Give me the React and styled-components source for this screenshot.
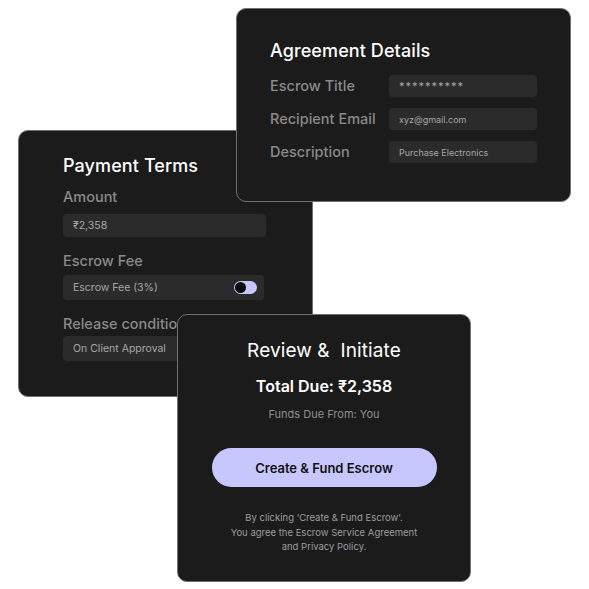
import React from 'react'
import styled, { createGlobalStyle } from 'styled-components'

const GlobalStyle = createGlobalStyle`
  html, body {
    margin: 0;
    padding: 0;
    background: #ffffff;
  }
  * {
    box-sizing: border-box;
  }
  body {
    font-family: Inter, "Noto Sans", sans-serif;
  }
`

const Canvas = styled.main`
  position: relative;
  width: 589px;
  height: 589px;
  background: #ffffff;
  overflow: hidden;
`

const Card = styled.section`
  position: absolute;
  left: ${p => p.$left}px;
  top: ${p => p.$top}px;
  width: ${p => p.$w}px;
  height: ${p => p.$h}px;
  background: #1b1b1b;
  border: 1px solid #707070;
  border-radius: 10px;
  display: flex;
  flex-direction: column;
`

const Title = styled.h2`
  margin: 0;
  font-size: 18px;
  line-height: 24px;
  font-weight: 500;
  color: #ffffff;
  letter-spacing: 0.1px;
`

const Label = styled.span`
  font-size: 14.5px;
  line-height: 20px;
  font-weight: 500;
  color: #8a8a8a;
  white-space: nowrap;
`

const Field = styled.div`
  display: flex;
  align-items: center;
  justify-content: space-between;
  width: ${p => p.$w || 148}px;
  height: ${p => p.$h || 22}px;
  padding: 0 ${p => p.$padR || 10}px 0 10px;
  background: #2b2b2b;
  border-radius: 4px;
  font-size: ${p => p.$fs || 9}px;
  color: #a6a6a6;
  white-space: nowrap;
  letter-spacing: ${p => p.$ls || 0}px;
`

/* agreement details */

const AgreementBody = styled.div`
  display: flex;
  flex-direction: column;
  gap: 12px;
  padding: 30px 0 0 33px;
`

const DetailGrid = styled.div`
  display: grid;
  grid-template-columns: 119px 148px;
  row-gap: 11px;
  align-items: center;
`

/* payment terms */

const PaymentBody = styled.div`
  display: flex;
  flex-direction: column;
  padding: 23px 0 0 44px;
`

const PaymentTitle = styled(Title)`
  margin-bottom: 9px;
`

const Group = styled.div`
  display: flex;
  flex-direction: column;
  gap: ${p => p.$gap || 7}px;
  margin-bottom: 14px;
`

const Toggle = styled.span`
  display: inline-flex;
  align-items: center;
  width: 23px;
  height: 13px;
  padding: 1px;
  border-radius: 7px;
  background: #c9c7ff;

  &::before {
    content: '';
    width: 11px;
    height: 11px;
    border-radius: 50%;
    background: #0a0a0a;
  }
`

/* review */

const ReviewBody = styled.div`
  display: flex;
  flex-direction: column;
  align-items: center;
  padding-top: 23px;
  text-align: center;
`

const ReviewTitle = styled(Title)`
  font-size: 19px;
  font-weight: 400;
  line-height: 26px;
  white-space: pre;
`

const Total = styled.div`
  margin-top: 11px;
  font-size: 16px;
  line-height: 22px;
  font-weight: 600;
  color: #ffffff;
`

const Due = styled.div`
  margin-top: 9px;
  font-size: 11px;
  line-height: 16px;
  color: #8f8f8f;
`

const Button = styled.button`
  margin-top: 26px;
  width: 225px;
  height: 39px;
  border: none;
  border-radius: 20px;
  background: #c8c7fd;
  color: #111111;
  font-family: inherit;
  font-size: 13px;
  font-weight: 600;
  cursor: pointer;
`

const Fine = styled.p`
  margin: 24px 0 0;
  font-size: 9.5px;
  line-height: 14.5px;
  color: #9d9d9d;
`

const App = () => {
  return (
    <>
      <GlobalStyle />
      <Canvas>
        <Card $left={18} $top={130} $w={295} $h={267}>
          <PaymentBody>
            <PaymentTitle>Payment Terms</PaymentTitle>
            <Group>
              <Label>Amount</Label>
              <Field $w={203} $h={23} $fs={10.5}>₹2,358</Field>
            </Group>
            <Group $gap={4}>
              <Label>Escrow Fee</Label>
              <Field $w={201} $h={25} $fs={10.5} $padR={7}>
                Escrow Fee (3%)
                <Toggle />
              </Field>
            </Group>
            <Group $gap={2}>
              <Label>Release conditions</Label>
              <Field $w={201} $h={25} $fs={10.5}>On Client Approval</Field>
            </Group>
          </PaymentBody>
        </Card>

        <Card $left={236} $top={8} $w={335} $h={194}>
          <AgreementBody>
            <Title>Agreement Details</Title>
            <DetailGrid>
              <Label>Escrow Title</Label>
              <Field $fs={11} $ls={1}>**********</Field>
              <Label>Recipient Email</Label>
              <Field>xyz@gmail.com</Field>
              <Label>Description</Label>
              <Field>Purchase Electronics</Field>
            </DetailGrid>
          </AgreementBody>
        </Card>

        <Card $left={177} $top={314} $w={294} $h={268}>
          <ReviewBody>
            <ReviewTitle>Review &amp;  Initiate</ReviewTitle>
            <Total>Total Due: ₹2,358</Total>
            <Due>Funds Due From: You</Due>
            <Button>Create &amp; Fund Escrow</Button>
            <Fine>
              By clicking ‘Create &amp; Fund Escrow’.<br />
              You agree the Escrow Service Agreement<br />
              and Privacy Policy.
            </Fine>
          </ReviewBody>
        </Card>
      </Canvas>
    </>
  )
}

export default App
